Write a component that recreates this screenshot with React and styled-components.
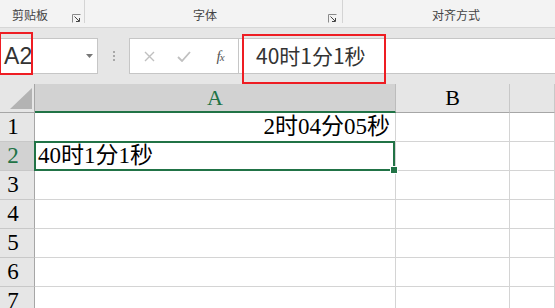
import React from "react";
import styled, { createGlobalStyle, css } from "styled-components";

const Global = createGlobalStyle`
  html, body { margin: 0; padding: 0; background: #ffffff; overflow: hidden; }
  body { width: 555px; height: 308px; font-family: "Noto Sans CJK SC", "Liberation Sans", sans-serif; }
  * { box-sizing: border-box; }
`;

const Page = styled.div`
  display: flex;
  flex-direction: column;
  width: 555px;
  height: 308px;
  overflow: hidden;
`;

/* ---------- Ribbon ---------- */
const Ribbon = styled.div`
  display: flex;
  flex: none;
  height: 28px;
  background: #f3f3f3;
  border-bottom: 1px solid #d6d6d6;
`;

const Group = styled.div`
  display: flex;
  align-items: flex-end;
  width: ${(p) => p.$w}px;
  height: 23px;
  padding-left: ${(p) => p.$pl}px;
  padding-right: ${(p) => p.$pr || 0}px;
  border-right: ${(p) => (p.$last ? "none" : "1px solid #d4d4d4")};
  flex: ${(p) => (p.$last ? "1" : "none")};
`;

const GroupLabel = styled.span`
  font-family: "Noto Sans CJK SC", sans-serif;
  font-size: 12px;
  line-height: 14px;
  color: #444;
  padding-bottom: 1px;
`;

const Launcher = styled.svg`
  margin-left: auto;
  width: 9px;
  height: 9px;
  flex: none;
`;

const LauncherIcon = () => (
  <Launcher viewBox="0 0 9 9">
    <path d="M0.5 8.5V0.5H8.5" fill="none" stroke="#8a8a8a" strokeWidth="1" />
    <path d="M2.5 2.5L7 7M4 7.5H7.5V4" fill="none" stroke="#444" strokeWidth="1" />
  </Launcher>
);

/* ---------- Formula bar ---------- */
const FormulaBar = styled.div`
  display: flex;
  flex: none;
  align-items: flex-start;
  height: 56px;
  padding-top: 10px;
  background: #e6e6e6;
`;

const NameBox = styled.div`
  position: relative;
  display: flex;
  align-items: center;
  width: 98px;
  height: 36px;
  background: #ffffff;
  border: 1px solid #c6c6c6;
  border-left: none;
  padding-left: 4px;
`;

const NameText = styled.span`
  font-family: "Liberation Sans", sans-serif;
  font-size: 23px;
  color: #333;
  letter-spacing: 0.2px;
`;

const Caret = styled.svg`
  margin-left: auto;
  margin-right: 4px;
  width: 7px;
  height: 4px;
`;

const Annot = styled.div`
  position: absolute;
  border: 2px solid #ee1d23;
  pointer-events: none;
  ${(p) => css`
    top: ${p.$top}px;
    left: ${p.$left}px;
    width: ${p.$w}px;
    height: ${p.$h}px;
  `}
`;

const Grip = styled.div`
  display: flex;
  flex-direction: column;
  justify-content: center;
  gap: 2px;
  width: 31px;
  height: 36px;
  align-items: center;
`;

const Dot = styled.span`
  width: 2px;
  height: 2px;
  background: #a8a8a8;
`;

const Buttons = styled.div`
  display: flex;
  align-items: center;
  width: 110px;
  height: 36px;
  background: #ffffff;
  border: 1px solid #c6c6c6;
  padding-left: 13px;
`;

const Btn = styled.span`
  display: flex;
  align-items: center;
  justify-content: center;
  width: ${(p) => p.$w}px;
`;

const Fx = styled.span`
  font-family: "Liberation Serif", serif;
  font-style: italic;
  font-size: 15px;
  color: #555;
  letter-spacing: -1px;
`;

const FxSub = styled.span`
  font-size: 11px;
`;

const Input = styled.div`
  position: relative;
  flex: 1;
  height: 36px;
  background: #ffffff;
  border: 1px solid #c6c6c6;
  border-left: none;
  border-right: none;
  display: flex;
  align-items: center;
  padding-left: 17px;
`;

const InputText = styled.span`
  font-family: "Noto Sans CJK SC", sans-serif;
  font-size: 21px;
  color: #333;
  line-height: 1;
  padding-bottom: 1px;
`;

/* ---------- Sheet ---------- */
const Sheet = styled.div`
  display: grid;
  flex: none;
  grid-template-columns: 35px 361px 114px 1fr;
  grid-auto-rows: 29px;
`;

const Corner = styled.div`
  display: flex;
  align-items: flex-end;
  padding: 0 0 3px 10px;
  background: #e6e6e6;
  border-right: 1px solid #a6a6a6;
  border-bottom: 1px solid #a6a6a6;
`;

const ColHead = styled.div`
  display: flex;
  align-items: center;
  justify-content: center;
  background: ${(p) => (p.$sel ? "#d2d2d2" : "#e6e6e6")};
  color: ${(p) => (p.$sel ? "#217346" : "#000")};
  border-right: 1px solid ${(p) => (p.$sel ? "#bcbcbc" : "#c8c8c8")};
  border-bottom: ${(p) => (p.$sel ? "2px solid #217346" : "1px solid #a6a6a6")};
  font-family: "Liberation Serif", serif;
  font-size: 22px;
  padding-top: ${(p) => (p.$sel ? "1px" : "0")};
`;

const RowHead = styled.div`
  background: ${(p) => (p.$sel ? "#d2d2d2" : "#e6e6e6")};
  color: ${(p) => (p.$sel ? "#217346" : "#000")};
  border-right: 1px solid #a6a6a6;
  border-bottom: 1px solid #c8c8c8;
  font-family: "Liberation Serif", serif;
  font-size: 23px;
  line-height: 28px;
  text-align: center;
  padding-right: 8px;
`;

const Cell = styled.div`
  position: relative;
  background: #ffffff;
  border-right: 1px solid #d4d4d4;
  border-bottom: 1px solid #d4d4d4;
  font-family: "Liberation Serif", "Noto Sans CJK SC", serif;
  font-size: 23px;
  line-height: 28px;
  color: #000;
  white-space: nowrap;
  text-align: ${(p) => (p.$right ? "right" : "left")};
  padding: ${(p) => (p.$right ? "0 5px 0 0" : "0 0 0 3px")};
  ${(p) =>
    p.$active &&
    css`
      &::after {
        content: "";
        position: absolute;
        top: -1px;
        left: -1px;
        right: 0;
        bottom: -1px;
        border: 2px solid #217346;
        pointer-events: none;
      }
    `}
`;

const Handle = styled.span`
  position: absolute;
  right: -2px;
  bottom: -3px;
  width: 6px;
  height: 6px;
  background: #217346;
  box-shadow: 0 0 0 1px #ffffff;
  z-index: 2;
`;

const rows = [1, 2, 3, 4, 5, 6, 7];

export default function App() {
  return (
    <Page>
      <Global />
      <Ribbon>
        <Group $w={85} $pl={12} $pr={3}>
          <GroupLabel>剪贴板</GroupLabel>
          <LauncherIcon />
        </Group>
        <Group $w={258} $pl={108} $pr={5}>
          <GroupLabel>字体</GroupLabel>
          <LauncherIcon />
        </Group>
        <Group $last $pl={89}>
          <GroupLabel>对齐方式</GroupLabel>
        </Group>
      </Ribbon>

      <FormulaBar>
        <NameBox>
          <NameText>A2</NameText>
          <Caret viewBox="0 0 7 4">
            <path d="M0 0H7L3.5 4Z" fill="#777" />
          </Caret>
          <Annot $top={-7} $left={-1} $w={34} $h={43} />
        </NameBox>
        <Grip>
          <Dot />
          <Dot />
          <Dot />
        </Grip>
        <Buttons>
          <Btn $w={12}>
            <svg width="11" height="11" viewBox="0 0 11 11">
              <path d="M1 1L10 10M10 1L1 10" stroke="#c0c0c0" strokeWidth="1.4" />
            </svg>
          </Btn>
          <Btn $w={58}>
            <svg width="14" height="11" viewBox="0 0 14 11">
              <path d="M1 6L5 10L13 1" fill="none" stroke="#c0c0c0" strokeWidth="1.8" />
            </svg>
          </Btn>
          <Btn $w={14}>
            <Fx>
              f<FxSub>x</FxSub>
            </Fx>
          </Btn>
        </Buttons>
        <Input>
          <InputText>40时1分1秒</InputText>
          <Annot $top={-5} $left={3} $w={144} $h={50} />
        </Input>
      </FormulaBar>

      <Sheet>
        <Corner>
          <svg width="22" height="21" viewBox="0 0 22 21">
            <path d="M0 21H22V0Z" fill="#b3b3b3" />
          </svg>
        </Corner>
        <ColHead $sel>A</ColHead>
        <ColHead>B</ColHead>
        <ColHead />
        {rows.map((r) => (
          <React.Fragment key={r}>
            <RowHead $sel={r === 2}>{r}</RowHead>
            <Cell $right={r === 1} $active={r === 2}>
              {r === 1 ? "2时04分05秒" : r === 2 ? "40时1分1秒" : ""}
              {r === 2 && <Handle />}
            </Cell>
            <Cell />
            <Cell />
          </React.Fragment>
        ))}
      </Sheet>
    </Page>
  );
}
